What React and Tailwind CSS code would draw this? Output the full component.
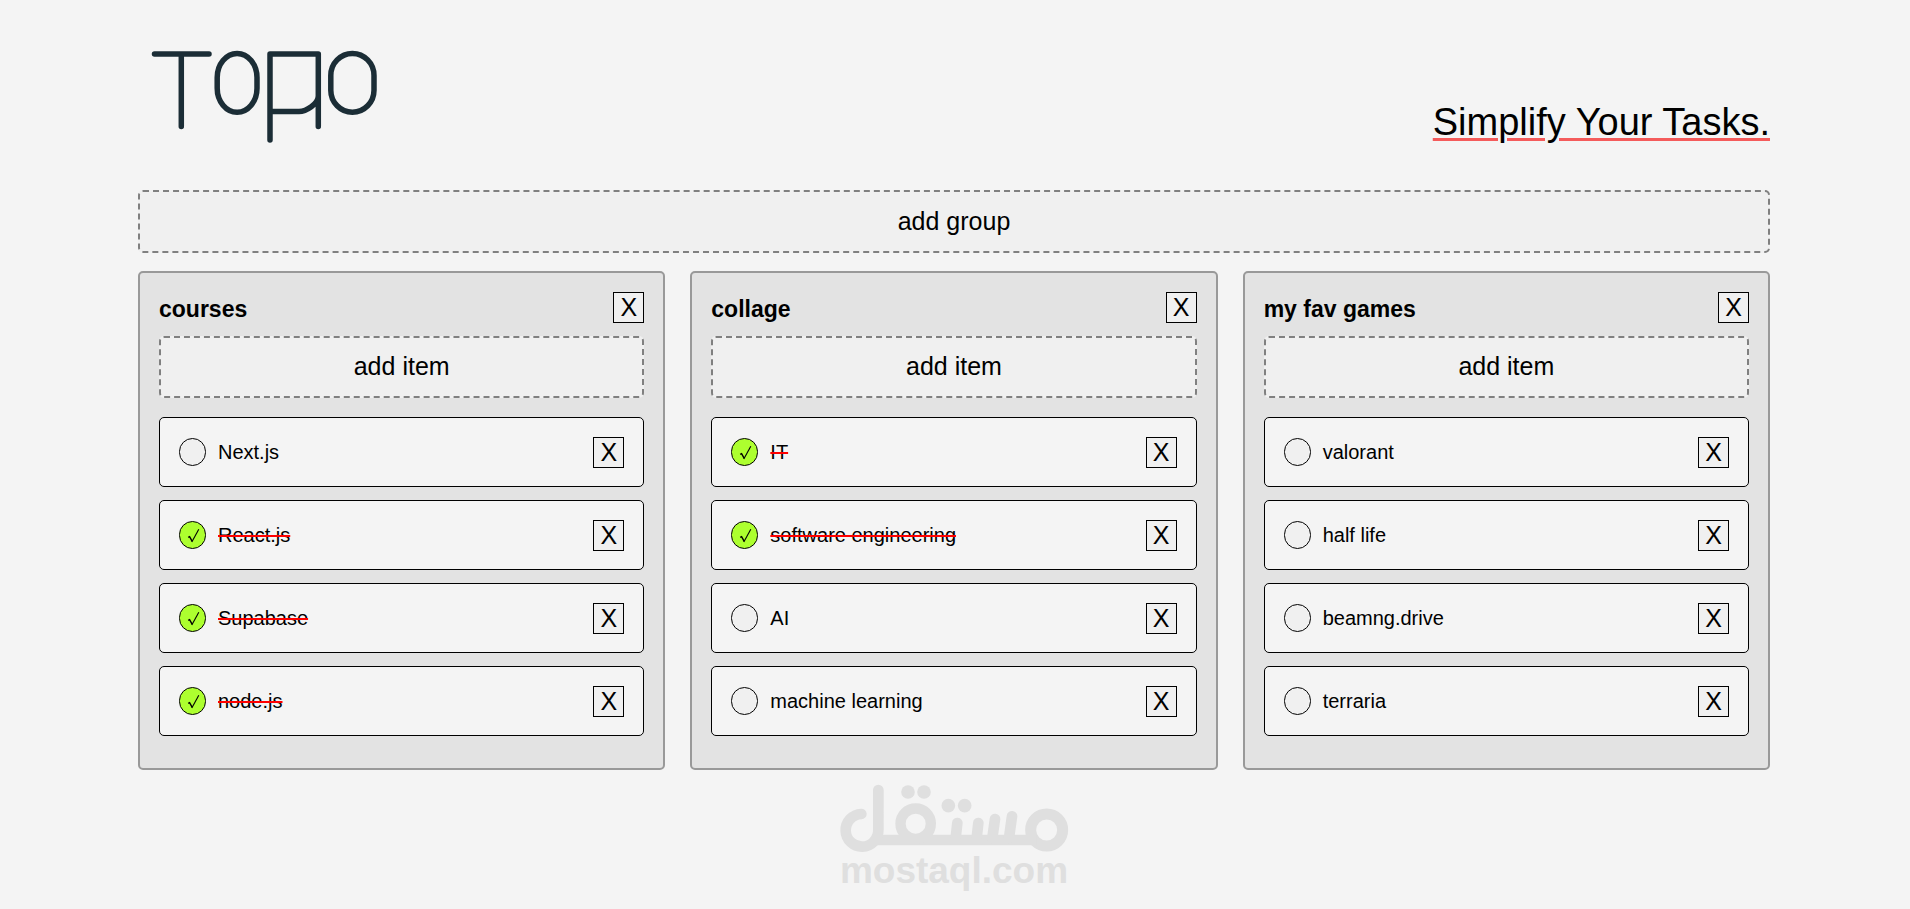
import { useState } from 'react'

const initialGroups = [
  {
    id: 1,
    title: 'courses',
    items: [
      { id: 11, name: 'Next.js', done: false },
      { id: 12, name: 'React.js', done: true },
      { id: 13, name: 'Supabase', done: true },
      { id: 14, name: 'node.js', done: true }
    ]
  },
  {
    id: 2,
    title: 'collage',
    items: [
      { id: 21, name: 'IT', done: true },
      { id: 22, name: 'software engineering', done: true },
      { id: 23, name: 'AI', done: false },
      { id: 24, name: 'machine learning', done: false }
    ]
  },
  {
    id: 3,
    title: 'my fav games',
    items: [
      { id: 31, name: 'valorant', done: false },
      { id: 32, name: 'half life', done: false },
      { id: 33, name: 'beamng.drive', done: false },
      { id: 34, name: 'terraria', done: false }
    ]
  }
]

function Logo() {
  return (
    <svg role="img" aria-label="TODO" viewBox="0 0 240 97" className="w-[240px] h-[97px]"
      fill="none" stroke="#1b2d36" strokeWidth="5.5" strokeLinecap="round" strokeLinejoin="round">
      <path d="M16.5 7H71M43.3 7V79.5" />
      <rect x="79.2" y="6.5" width="39.8" height="58.7" rx="19.9" ry="24" />
      <path d="M132 93V7H180.3V79.5M132 64.6H161C168 64.6 180.3 57 180.3 49" />
      <rect x="192.8" y="6.5" width="43.2" height="58.7" rx="21.6" ry="22" />
    </svg>
  )
}

function Watermark() {
  return (
    <div className="mt-[13px] flex flex-col items-center text-[#dfdfdf]">
      <svg role="img" aria-label="مستقل" viewBox="60 40 690 210" className="w-[230px] h-[70px]"
        fill="none" stroke="currentColor" strokeWidth="32" strokeLinecap="round">
        <circle cx="683" cy="181" r="48" strokeWidth="33" />
        <path d="M168 211H652" strokeLinecap="butt" />
        <path d="M127 133A49 49 0 1 0 178 181V61" />
        <circle cx="290" cy="162" r="45.5" strokeWidth="31" />
        <path d="M415 160L410 205M478 160L473 205M528 148L520 205M579 140L570 205" />
        <g fill="currentColor" stroke="none">
          <circle cx="267" cy="67" r="20.5" />
          <circle cx="315" cy="67" r="20.5" />
          <circle cx="388" cy="108" r="20.5" />
          <circle cx="437" cy="108" r="20.5" />
        </g>
      </svg>
      <span className="text-[37px] leading-9 font-bold">mostaql.com</span>
    </div>
  )
}

function RemoveButton({ label, onClick }) {
  return (
    <button onClick={onClick} aria-label={label}
      className="w-[31px] h-[31px] shrink-0 flex items-start justify-center border border-black bg-[#f0f0f0] text-[25px] leading-7">
      X
    </button>
  )
}

function Item({ item, onToggle, onRemove }) {
  return (
    <li className="h-[70px] px-[19px] flex items-center justify-between border border-black rounded-[5px] bg-[#f4f4f4]">
      <label className="flex items-center gap-3 cursor-pointer">
        <span className="grid">
          <input type="checkbox" checked={item.done} onChange={onToggle}
            className="col-start-1 row-start-1 appearance-none w-[27px] h-7 rounded-full border border-black bg-[#f0f0f0] checked:bg-[#adff2f]" />
          {item.done && (
            <svg viewBox="0 0 27 28" className="col-start-1 row-start-1 w-[27px] h-7 pointer-events-none"
              fill="none" stroke="#000">
              <path d="M9.2 16.4L10.6 15.6L13.2 20.4" strokeWidth="1.4" />
              <path d="M12.8 21L19.8 8.3" strokeWidth="1.1" />
            </svg>
          )}
        </span>
        <span className={`text-xl leading-6 ${item.done ? 'line-through decoration-2 decoration-[#ff0000]' : ''}`}>
          {item.name}
        </span>
      </label>
      <RemoveButton label={`remove ${item.name}`} onClick={onRemove} />
    </li>
  )
}

export default function App() {
  const [groups, setGroups] = useState(initialGroups)

  const addGroup = () =>
    setGroups([...groups, { id: Date.now(), title: 'new group', items: [] }])

  const removeGroup = id => setGroups(groups.filter(g => g.id !== id))

  const updateItems = (groupId, fn) =>
    setGroups(groups.map(g => g.id === groupId ? { ...g, items: fn(g.items) } : g))

  return (
    <div className="min-h-screen pl-[138px] pr-[140px] bg-[#f4f4f4] text-black font-['Liberation_Sans',Arial,sans-serif]">

      {/* Header */}
      <header className="pt-[47px] mb-[46px] flex items-end justify-between">
        <Logo />
        <p className="text-[38px] leading-[44px] underline decoration-[3px] decoration-[#f45b5b] underline-offset-[3px]">
          Simplify Your Tasks.
        </p>
      </header>

      <button onClick={addGroup}
        className="w-full h-[63px] pb-0.5 border-2 border-dashed border-[#808080] rounded-[5px] bg-[#f0f0f0] text-[25px] leading-7">
        add group
      </button>

      {/* Groups */}
      <main className="mt-[18px] grid grid-cols-3 items-start gap-[25px]">
        {groups.map(g => (
          <section key={g.id} className="p-[19px] pb-8 border-2 border-[#999] rounded-[5px] bg-[#e3e3e3]">
            <div className="flex items-end justify-between mb-[13px]">
              <h2 className="text-[23px] leading-7 font-bold">{g.title}</h2>
              <RemoveButton label={`remove ${g.title}`} onClick={() => removeGroup(g.id)} />
            </div>
            <button
              onClick={() => updateItems(g.id, items => [...items, { id: Date.now(), name: 'new item', done: false }])}
              className="w-full h-[62px] mb-[19px] pb-0.5 border-2 border-dashed border-[#808080] rounded-[5px] bg-[#f0f0f0] text-[25px] leading-7">
              add item
            </button>
            <ul className="flex flex-col gap-[13px]">
              {g.items.map(item => (
                <Item key={item.id} item={item}
                  onToggle={() => updateItems(g.id, items =>
                    items.map(i => i.id === item.id ? { ...i, done: !i.done } : i))}
                  onRemove={() => updateItems(g.id, items => items.filter(i => i.id !== item.id))} />
              ))}
            </ul>
          </section>
        ))}
      </main>

      <Watermark />
    </div>
  )
}
